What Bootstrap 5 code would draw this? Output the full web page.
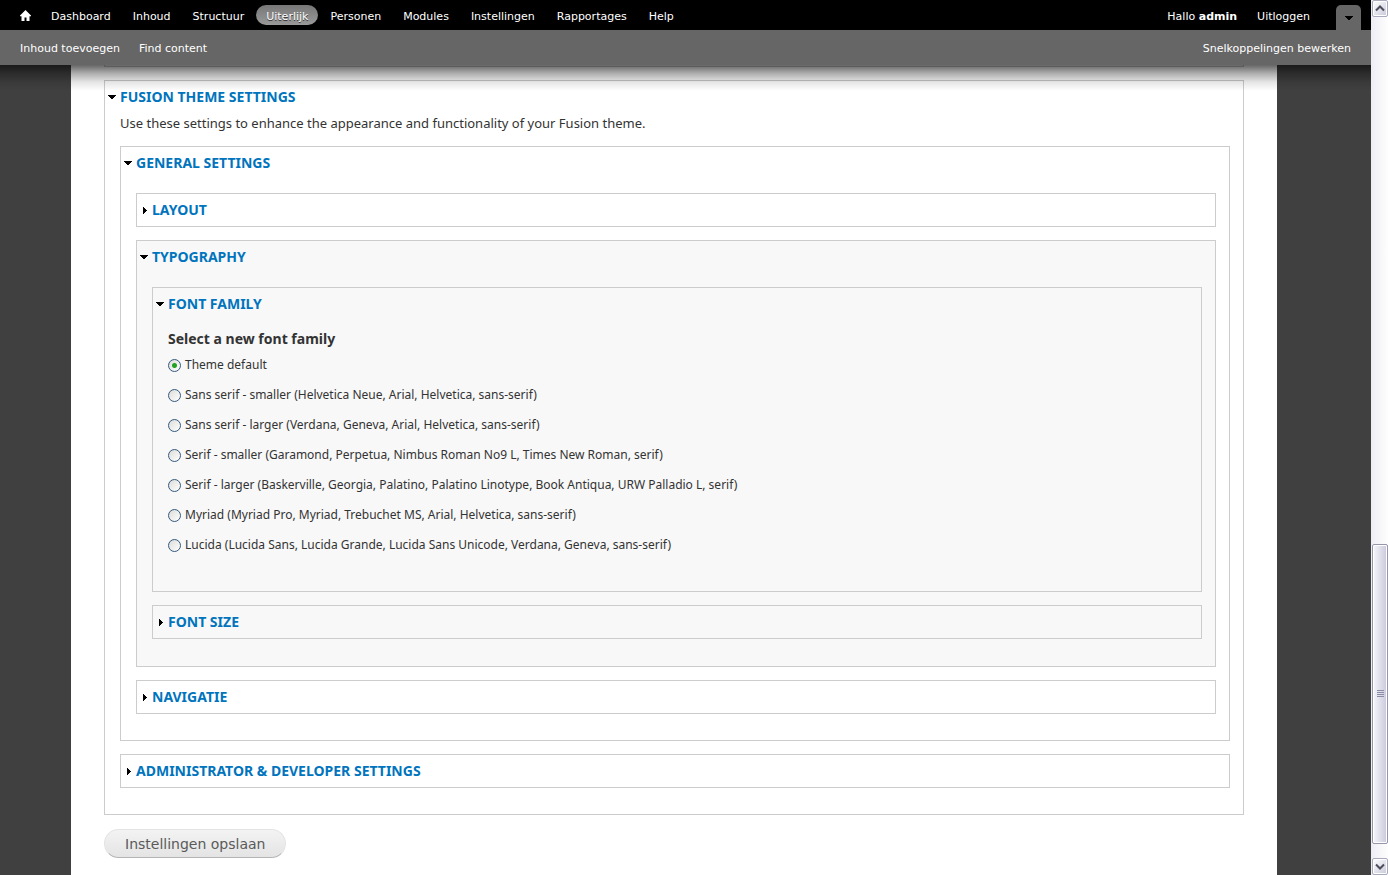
<!DOCTYPE html>
<html lang="nl">
<head>
<meta charset="utf-8">
<meta name="viewport" content="width=device-width, initial-scale=1">
<title>Uiterlijk</title>
<link href="https://cdn.jsdelivr.net/npm/bootstrap@5.3.0/dist/css/bootstrap.min.css" rel="stylesheet">
<style>
  body { background: #404040; color: #333; font-family: "Noto Sans", sans-serif; font-size: 13px; line-height: 20px; }
  .viewport { min-height: 100vh; }
  .toolbar { position: relative; z-index: 2; font-family: "DejaVu Sans", sans-serif; font-size: 11px; }
  .toolbar::after { content: ""; position: absolute; top: 100%; left: 0; right: 0; height: 26px; pointer-events: none; background: linear-gradient(rgba(0,0,0,.6), rgba(0,0,0,.32) 32%, rgba(0,0,0,.1) 66%, transparent); }
  .toolbar a { color: #fff; text-decoration: none; }
  .bar-menu { background: #000; height: 30px; color: #fff; padding: 0 10px; }
  .bar-menu a, .bar-menu span { height: 20px; line-height: 24px; border-radius: 10px; padding: 0 10px; }
  .bar-menu a + a + a { margin-left: 2px; }
  .bar-menu a.active { background: linear-gradient(#777, #999); text-shadow: 0 1px 0 #333; }
  .drawer { width: 25px; height: 25px; background: #666; border-radius: 5px 5px 0 0; }
  .bar-shortcuts { background: #666; height: 35px; padding: 2px 20px 0; gap: 19px; }
  .sheet { background: #fff; margin: 0 94px 0 71px; padding: 0 33px 17px; }
  .panel { border: 1px solid #ccc; padding: 0 13px 26px 15px; margin-top: 13px; }
  .panel.closed { padding-bottom: 0; }
  .panel.shaded { background: #f8f8f8; padding-bottom: 27px; }
  .panel > legend { margin: 0; font-size: 14px; font-weight: 700; line-height: 32px; text-transform: uppercase; }
  .panel > legend + .panel { margin-top: 46px; }
  .panel legend a { color: #0074bd; text-decoration: none; }
  .arrow { width: 12px; height: 8px; margin-left: -12px; }
  .previous { height: 2px; border: solid #ccc; border-width: 0 1px 1px; }
  .choices { padding: 8px 0 5px; }
  .choice-title { font-size: 14px; line-height: 22px; }
  .choice { height: 30px; gap: 4px; font-size: 12px; }
  .choice input { appearance: none; width: 13px; height: 13px; border: 1px solid #33597f; border-radius: 50%; background: linear-gradient(135deg, #dcdcd8, #fff); margin: 0; }
  .choice input:checked { background: radial-gradient(circle, #21a121 0 2px, transparent 3px), linear-gradient(135deg, #dcdcd8, #fff); }
  .save { height: 29px; margin-top: 14px; padding: 0 20px; border: 1px solid #e4e4e4; border-bottom-color: #b4b4b4; border-radius: 15px; background: linear-gradient(#f3f3f3, #e4e4e4); color: #5a5a5a; font-family: "DejaVu Sans", sans-serif; font-size: 14px; }
  .scroller { width: 17px; height: 100vh; position: sticky; top: 0; z-index: 3; background: linear-gradient(90deg, #eeedf5, #fefefe); padding: 0 0 0 1px; }
  .scroller button { width: 16px; height: 17px; border: 1px solid #a9a9bd; border-radius: 2px; background: linear-gradient(135deg, #fff, #c8c9da); box-shadow: inset 0 0 0 1px #fff; padding: 0; }
  .thumb { flex: 299 0 0; border: 1px solid #9594ab; border-radius: 2px; background: linear-gradient(90deg, #f6f6fb, #c9c9dc); box-shadow: inset 0 0 0 1px #fff; }
  .space-above { flex: 528 0 0; }
  .space-below { flex: 14 0 0; }
</style>
</head>
<body>
<svg class="d-none" aria-hidden="true">
  <symbol id="down" viewBox="0 0 12 8"><path d="M0 1h8v1H7v1H6v1H5v1H3V4H2V3H1V2H0z"/></symbol>
  <symbol id="right" viewBox="0 0 12 8"><path d="M3 0h1v1h1v1h1v1h1v1H6v1H5v1H4v1H3z"/></symbol>
</svg>
<div class="viewport d-flex">
  <div class="flex-grow-1 d-flex flex-column">
    <header class="toolbar">
      <nav class="bar-menu d-flex align-items-center" aria-label="Beheer">
        <a href="#" aria-label="Home" class="d-flex align-items-center"><svg width="11" height="11" viewBox="0 0 11 11" fill="#fff"><path d="M5.500 0 11 5.500v.8H9.500V11h-3V7.500h-2V11h-3V6.300H0v-.8z"/></svg></a>
        <a href="#">Dashboard</a><a href="#">Inhoud</a><a href="#">Structuur</a><a href="#" class="active">Uiterlijk</a><a href="#">Personen</a><a href="#">Modules</a><a href="#">Instellingen</a><a href="#">Rapportages</a><a href="#">Help</a>
        <span class="ms-auto">Hallo <strong>admin</strong></span>
        <a href="#" class="me-3">Uitloggen</a>
        <button type="button" class="drawer border-0 p-0 align-self-end" aria-label="Snelkoppelingen"><svg width="8" height="4" viewBox="0 1 8 4"><path d="M0 1h8v1H7v1H6v1H5v1H3V4H2V3H1V2H0z"/></svg></button>
      </nav>
      <nav class="bar-shortcuts d-flex align-items-center" aria-label="Snelkoppelingen">
        <a href="#">Inhoud toevoegen</a><a href="#">Find content</a><a href="#" class="ms-auto">Snelkoppelingen bewerken</a>
      </nav>
    </header>
    <main class="sheet flex-grow-1">
      <form>
        <div class="previous"></div>
        <fieldset class="panel">
          <legend><a href="#"><svg class="arrow"><use href="#down"/></svg>Fusion theme settings</a></legend>
          <div>Use these settings to enhance the appearance and functionality of your Fusion theme.</div>
          <fieldset class="panel">
            <legend><a href="#"><svg class="arrow"><use href="#down"/></svg>General settings</a></legend>
            <fieldset class="panel closed"><legend><a href="#"><svg class="arrow"><use href="#right"/></svg>Layout</a></legend></fieldset>
            <fieldset class="panel shaded">
              <legend><a href="#"><svg class="arrow"><use href="#down"/></svg>Typography</a></legend>
              <fieldset class="panel">
                <legend><a href="#"><svg class="arrow"><use href="#down"/></svg>Font family</a></legend>
                <div class="choices" role="radiogroup" aria-labelledby="family">
                  <div id="family" class="choice-title fw-bold">Select a new font family</div>
                  <div class="choice d-flex align-items-center"><input type="radio" name="font" id="f1" checked><label for="f1">Theme default</label></div>
                  <div class="choice d-flex align-items-center"><input type="radio" name="font" id="f2"><label for="f2">Sans serif - smaller (Helvetica Neue, Arial, Helvetica, sans-serif)</label></div>
                  <div class="choice d-flex align-items-center"><input type="radio" name="font" id="f3"><label for="f3">Sans serif - larger (Verdana, Geneva, Arial, Helvetica, sans-serif)</label></div>
                  <div class="choice d-flex align-items-center"><input type="radio" name="font" id="f4"><label for="f4">Serif - smaller (Garamond, Perpetua, Nimbus Roman No9 L, Times New Roman, serif)</label></div>
                  <div class="choice d-flex align-items-center"><input type="radio" name="font" id="f5"><label for="f5">Serif - larger (Baskerville, Georgia, Palatino, Palatino Linotype, Book Antiqua, URW Palladio L, serif)</label></div>
                  <div class="choice d-flex align-items-center"><input type="radio" name="font" id="f6"><label for="f6">Myriad (Myriad Pro, Myriad, Trebuchet MS, Arial, Helvetica, sans-serif)</label></div>
                  <div class="choice d-flex align-items-center"><input type="radio" name="font" id="f7"><label for="f7">Lucida (Lucida Sans, Lucida Grande, Lucida Sans Unicode, Verdana, Geneva, sans-serif)</label></div>
                </div>
              </fieldset>
              <fieldset class="panel closed"><legend><a href="#"><svg class="arrow"><use href="#right"/></svg>Font size</a></legend></fieldset>
            </fieldset>
            <fieldset class="panel closed"><legend><a href="#"><svg class="arrow"><use href="#right"/></svg>Navigatie</a></legend></fieldset>
          </fieldset>
          <fieldset class="panel closed"><legend><a href="#"><svg class="arrow"><use href="#right"/></svg>Administrator &amp; developer settings</a></legend></fieldset>
        </fieldset>
        <button type="submit" class="save">Instellingen opslaan</button>
      </form>
    </main>
  </div>
  <aside class="scroller d-flex flex-column" aria-label="Schuifbalk">
    <button type="button" class="d-flex align-items-center justify-content-center" aria-label="Omhoog"><svg width="10" height="7" viewBox="0 0 10 7" fill="none" stroke="#4d4d5c" stroke-width="2"><path d="M1 5.500 5 1.500l4 4"/></svg></button>
    <div class="space-above"></div>
    <div class="thumb d-flex align-items-center justify-content-center"><svg width="7" height="8" viewBox="0 0 7 8" stroke="#8b8ba5"><path d="M0 .5h7M0 2.500h7M0 4.500h7M0 6.500h7"/></svg></div>
    <div class="space-below"></div>
    <button type="button" class="d-flex align-items-center justify-content-center" aria-label="Omlaag"><svg width="10" height="7" viewBox="0 0 10 7" fill="none" stroke="#4d4d5c" stroke-width="2"><path d="m1 1.500 4 4 4-4"/></svg></button>
  </aside>
</div>
<script src="https://cdn.jsdelivr.net/npm/bootstrap@5.3.0/dist/js/bootstrap.bundle.min.js"></script>
</body>
</html>
